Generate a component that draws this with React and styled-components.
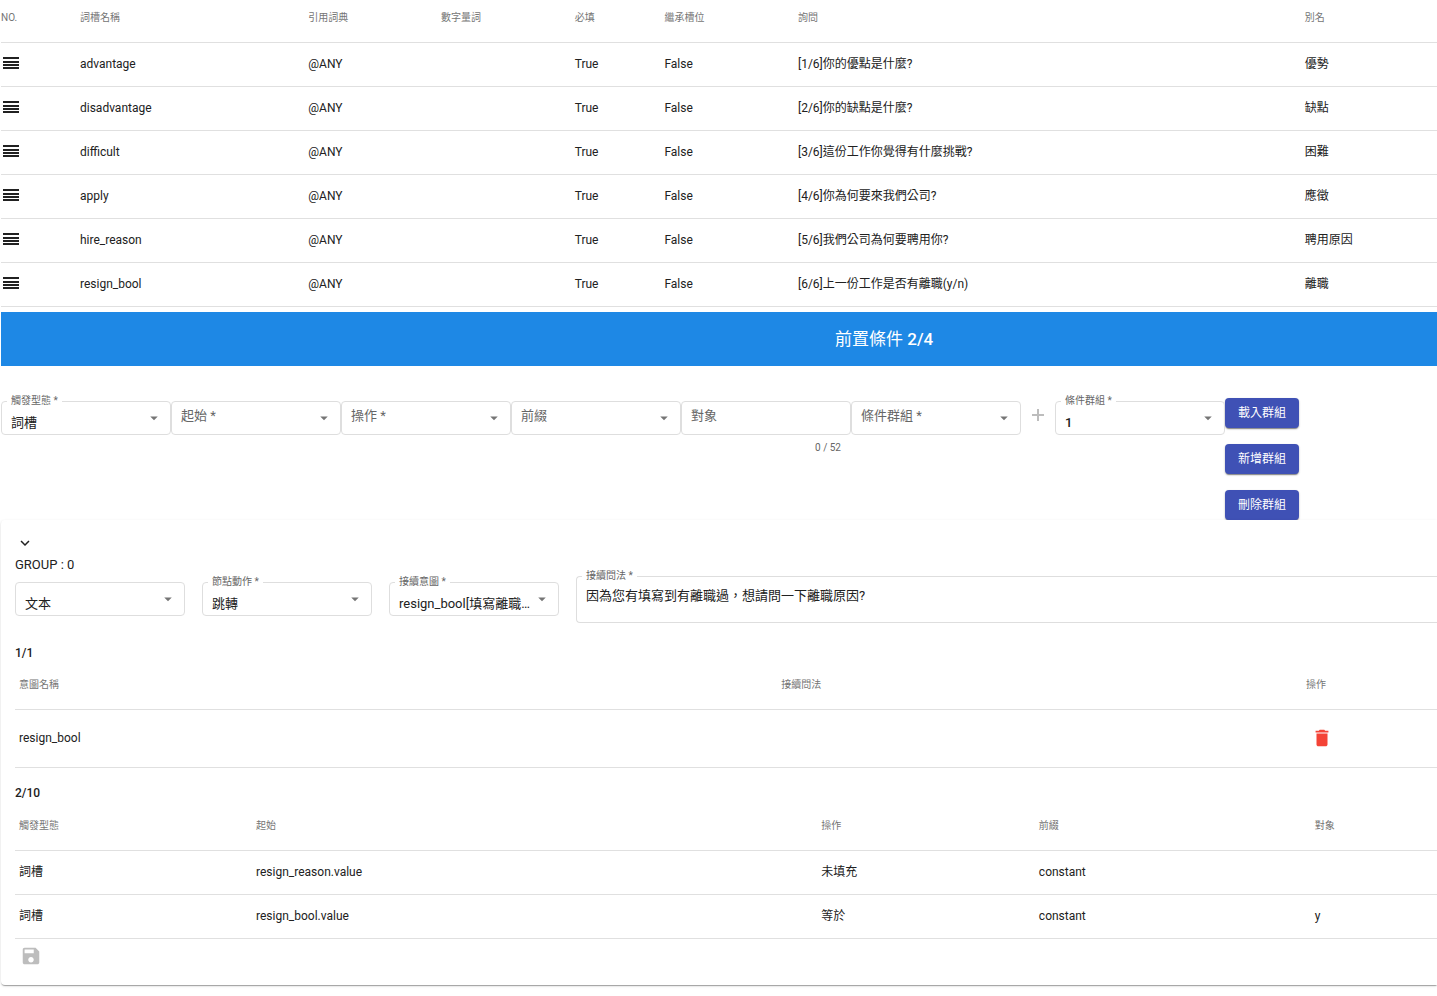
import React from 'react';
import styled, { createGlobalStyle, css } from 'styled-components';

const Global = createGlobalStyle`
  *, *::before, *::after { box-sizing: border-box; }
  body {
    margin: 0;
    background: #fff;
    color: #212121;
    font-family: Roboto, "Noto Sans CJK TC", sans-serif;
    font-size: 12px;
    line-height: 16px;
  }
  button, input, select, textarea { font: inherit; color: inherit; }
`;

const Page = styled.main`
  padding: 0 0 8px 1px;
  overflow: hidden;
`;

const Table = styled.table`
  width: 100%;
  table-layout: fixed;
  border-collapse: separate;
  border-spacing: 0;
  text-align: left;
`;

const Col = styled.col`
  width: ${(p) => p.$w || 'auto'};
`;

const HeadCell = styled.th`
  height: ${(p) => p.$h || 43}px;
  padding: 0 0 17px ${(p) => p.$inset || 0}px;
  vertical-align: bottom;
  border-bottom: 1px solid #e0e0e0;
  color: #757575;
  font-size: 10px;
  line-height: 14px;
  font-weight: 400;
  white-space: nowrap;
`;

const Cell = styled.td`
  height: ${(p) => p.$h || 44}px;
  padding: 0 0 2px ${(p) => p.$inset || 0}px;
  border-bottom: 1px solid #e0e0e0;
  font-size: 12px;
  white-space: nowrap;
`;

const Banner = styled.h1`
  margin: 5px 0 0;
  height: 54px;
  padding-left: 23%;
  display: flex;
  align-items: center;
  justify-content: center;
  background: #1e88e5;
  color: #fff;
  font-size: 17px;
  line-height: 24px;
  font-weight: 400;
`;

const BannerCount = styled.span`
  font-weight: 500;
  white-space: pre;
`;

const Toolbar = styled.form`
  display: flex;
  align-items: flex-start;
  padding-top: 32px;
`;

const FieldColumn = styled.div`
  flex: none;
  width: 170px;
  padding-top: 3px;
`;

const Helper = styled.div`
  padding: 6px 10px 0;
  text-align: right;
  color: #666;
  font-size: 10px;
  line-height: 14px;
`;

const FieldBox = styled.div`
  position: relative;
  width: ${(p) => (p.$wide ? 'auto' : '170px')};
  height: ${(p) => (p.$wide ? 47 : 34)}px;
  flex: ${(p) => (p.$wide ? '1' : 'none')};
`;

const controlStyle = css`
  display: block;
  width: 100%;
  height: 100%;
  margin: 0;
  border: 1px solid #dedede;
  border-radius: 4px;
  background: transparent;
  outline: none;
  font-size: 13px;
  line-height: 16px;
`;

const Select = styled.select`
  ${controlStyle}
  appearance: none;
  padding: 10px 26px 0 9px;
  text-overflow: ellipsis;
  font-weight: ${(p) => (p.$strong ? 500 : 400)};
`;

const Input = styled.input`
  ${controlStyle}
  padding: 8px 9px 0;
`;

const TextArea = styled.textarea`
  ${controlStyle}
  padding: 11px 9px;
  resize: none;
  overflow: hidden;
  border-right: 0;
  border-radius: 4px 0 0 4px;
`;

const Label = styled.label`
  position: absolute;
  pointer-events: none;
  white-space: nowrap;
  color: #666;
  ${(p) =>
    p.$floating
      ? css`
          top: -7px;
          left: 6px;
          padding: 0 4px;
          background: #fff;
          font-size: 10px;
          line-height: 14px;
        `
      : css`
          top: 7px;
          left: 10px;
          font-size: 13px;
          line-height: 16px;
        `}
`;

const Arrow = styled.svg`
  position: absolute;
  right: 8px;
  top: 8px;
  width: 18px;
  height: 18px;
  fill: #757575;
  pointer-events: none;
`;

const IconButton = styled.button`
  display: flex;
  align-items: center;
  justify-content: center;
  width: ${(p) => p.$w || 34}px;
  height: ${(p) => p.$h || 34}px;
  padding: 0;
  border: 0;
  background: none;
  color: ${(p) => p.$color || '#212121'};

  svg {
    display: block;
    width: ${(p) => p.$icon || 22}px;
    height: ${(p) => p.$icon || 22}px;
    fill: currentColor;
  }
`;

const ButtonStack = styled.div`
  display: flex;
  flex-direction: column;
  gap: 16px;
`;

const Button = styled.button`
  width: 74px;
  height: 30px;
  padding: 0;
  border: 0;
  border-radius: 4px;
  background: #3f51b5;
  color: #fff;
  font-size: 12px;
  line-height: 16px;
  box-shadow: 0 2px 1px -1px rgba(0, 0, 0, 0.3), 0 1px 2px rgba(0, 0, 0, 0.3);
`;

const Card = styled.section`
  position: relative;
  padding: 13px 0 0 14px;
  border-radius: 4px 0 0 4px;
  background: #fff;
  box-shadow: 0 2px 1px -1px rgba(0, 0, 0, 0.2), 0 1px 1px rgba(0, 0, 0, 0.14),
    0 1px 3px rgba(0, 0, 0, 0.12);
`;

const GroupTitle = styled.h2`
  margin: 0;
  padding-top: 4px;
  font-size: 13px;
  line-height: 16px;
  font-weight: 400;
`;

const GroupFields = styled.div`
  display: flex;
  align-items: center;
  gap: 17px;
  height: 52px;
`;

const Counter = styled.h3`
  margin: 0;
  padding: ${(p) => (p.$first ? 18 : 15)}px 0 0;
  font-size: 12px;
  line-height: 20px;
  font-weight: 500;
`;

const CardFooter = styled.footer`
  height: 46px;
`;

const ReorderIcon = styled.svg`
  display: block;
  width: 20px;
  height: 20px;
  fill: #212121;
`;

function Field({ id, label, value, input, strong }) {
  const floating = Boolean(value);
  return (
    <FieldBox>
      {input ? (
        <Input id={id} type="text" maxLength={52} />
      ) : (
        <Select id={id} defaultValue={value || ''} $strong={strong} aria-label={label ? undefined : value}>
          <option value={value || ''}>{value || ''}</option>
        </Select>
      )}
      {label && (
        <Label htmlFor={id} $floating={floating}>
          {label}
        </Label>
      )}
      {!input && (
        <Arrow viewBox="0 0 24 24" aria-hidden="true">
          <path d="M7 10l5 5 5-5z" />
        </Arrow>
      )}
    </FieldBox>
  );
}

function DataTable({ widths, heads, headHeight, rows, rowHeight, inset }) {
  return (
    <Table>
      <colgroup>
        {heads.map((h, i) => (
          <Col key={h} $w={widths[i]} />
        ))}
      </colgroup>
      <thead>
        <tr>
          {heads.map((h) => (
            <HeadCell key={h} scope="col" $h={headHeight} $inset={inset}>
              {h}
            </HeadCell>
          ))}
        </tr>
      </thead>
      <tbody>
        {rows.map((row, r) => (
          <tr key={r}>
            {row.map((c, i) => (
              <Cell key={i} $h={rowHeight} $inset={inset}>
                {c}
              </Cell>
            ))}
          </tr>
        ))}
      </tbody>
    </Table>
  );
}

const slots = [
  ['advantage', '[1/6]你的優點是什麼?', '優勢'],
  ['disadvantage', '[2/6]你的缺點是什麼?', '缺點'],
  ['difficult', '[3/6]這份工作你覺得有什麼挑戰?', '困難'],
  ['apply', '[4/6]你為何要來我們公司?', '應徵'],
  ['hire_reason', '[5/6]我們公司為何要聘用你?', '聘用原因'],
  ['resign_bool', '[6/6]上一份工作是否有離職(y/n)', '離職'],
];

const dragHandle = (
  <ReorderIcon viewBox="0 0 20 20" aria-hidden="true">
    <path d="M2 3h16v2H2zM2 7h16v2H2zM2 10h16v2H2zM2 13h16v2H2z" />
  </ReorderIcon>
);

export default function App() {
  return (
    <Page>
      <Global />
      <DataTable
        heads={['NO.', '詞槽名稱', '引用詞典', '數字量詞', '必填', '繼承槽位', '詢問', '別名']}
        widths={['5.5%', '15.9%', '9.25%', '9.3%', '6.25%', '9.3%', '35.3%']}
        headHeight={43}
        rowHeight={44}
        rows={slots.map(([name, question, alias]) => [
          dragHandle, name, '@ANY', '', 'True', 'False', question, alias,
        ])}
      />
      <Banner>
        前置條件<BannerCount> 2/4</BannerCount>
      </Banner>
      <Toolbar onSubmit={(e) => e.preventDefault()}>
        <FieldColumn><Field id="trigger" label="觸發型態 *" value="詞槽" /></FieldColumn>
        <FieldColumn><Field id="start" label="起始 *" /></FieldColumn>
        <FieldColumn><Field id="operator" label="操作 *" /></FieldColumn>
        <FieldColumn><Field id="prefix" label="前綴" /></FieldColumn>
        <FieldColumn>
          <Field id="target" label="對象" input />
          <Helper>0 / 52</Helper>
        </FieldColumn>
        <FieldColumn><Field id="condition" label="條件群組 *" /></FieldColumn>
        <IconButton type="button" aria-label="新增" $color="#bdbdbd" $icon={18}>
          <svg viewBox="0 0 18 18"><path d="M8 3h2v5h5v2h-5v5H8v-5H3V8h5z" /></svg>
        </IconButton>
        <FieldColumn><Field id="group" label="條件群組 *" value="1" strong /></FieldColumn>
        <ButtonStack>
          <Button type="button">載入群組</Button>
          <Button type="button">新增群組</Button>
          <Button type="button">刪除群組</Button>
        </ButtonStack>
      </Toolbar>
      <Card>
        <IconButton type="button" aria-label="收合" $w={20} $h={20} $icon={18}>
          <svg viewBox="0 0 24 24"><path d="M16.59 8.59L12 13.17 7.41 8.59 6 10l6 6 6-6z" /></svg>
        </IconButton>
        <GroupTitle>GROUP : 0</GroupTitle>
        <GroupFields>
          <Field id="kind" value="文本" />
          <Field id="action" label="節點動作 *" value="跳轉" />
          <Field id="intent" label="接續意圖 *" value="resign_bool[填寫離職原因]" />
          <FieldBox $wide>
            <TextArea id="question" defaultValue="因為您有填寫到有離職過，想請問一下離職原因?" />
            <Label htmlFor="question" $floating>接續問法 *</Label>
          </FieldBox>
        </GroupFields>
        <Counter $first>1/1</Counter>
        <DataTable
          heads={['意圖名稱', '接續問法', '操作']}
          widths={['53.6%', '36.9%']}
          inset={4}
          headHeight={47}
          rowHeight={58}
          rows={[[
            'resign_bool',
            '',
            <IconButton key="del" type="button" aria-label="刪除" $color="#f44336" $w={32}>
              <svg viewBox="0 0 24 24"><path d="M6 19c0 1.1.9 2 2 2h8c1.1 0 2-.9 2-2V7H6v12zM19 4h-3.5l-1-1h-5l-1 1H5v2h14V4z" /></svg>
            </IconButton>,
          ]]}
        />
        <Counter>2/10</Counter>
        <DataTable
          heads={['觸發型態', '起始', '操作', '前綴', '對象']}
          widths={['16.67%', '39.75%', '15.3%', '19.4%']}
          inset={4}
          headHeight={48}
          rowHeight={44}
          rows={[
            ['詞槽', 'resign_reason.value', '未填充', 'constant', ''],
            ['詞槽', 'resign_bool.value', '等於', 'constant', 'y'],
          ]}
        />
        <CardFooter>
          <IconButton type="button" aria-label="儲存" $color="#bdbdbd" $w={32}>
            <svg viewBox="0 0 24 24"><path d="M17 3H5c-1.11 0-2 .9-2 2v14c0 1.1.89 2 2 2h14c1.1 0 2-.9 2-2V7l-4-4zm-5 16c-1.66 0-3-1.34-3-3s1.34-3 3-3 3 1.34 3 3-1.34 3-3 3zm3-10H5V5h10v4z" /></svg>
          </IconButton>
        </CardFooter>
      </Card>
    </Page>
  );
}
